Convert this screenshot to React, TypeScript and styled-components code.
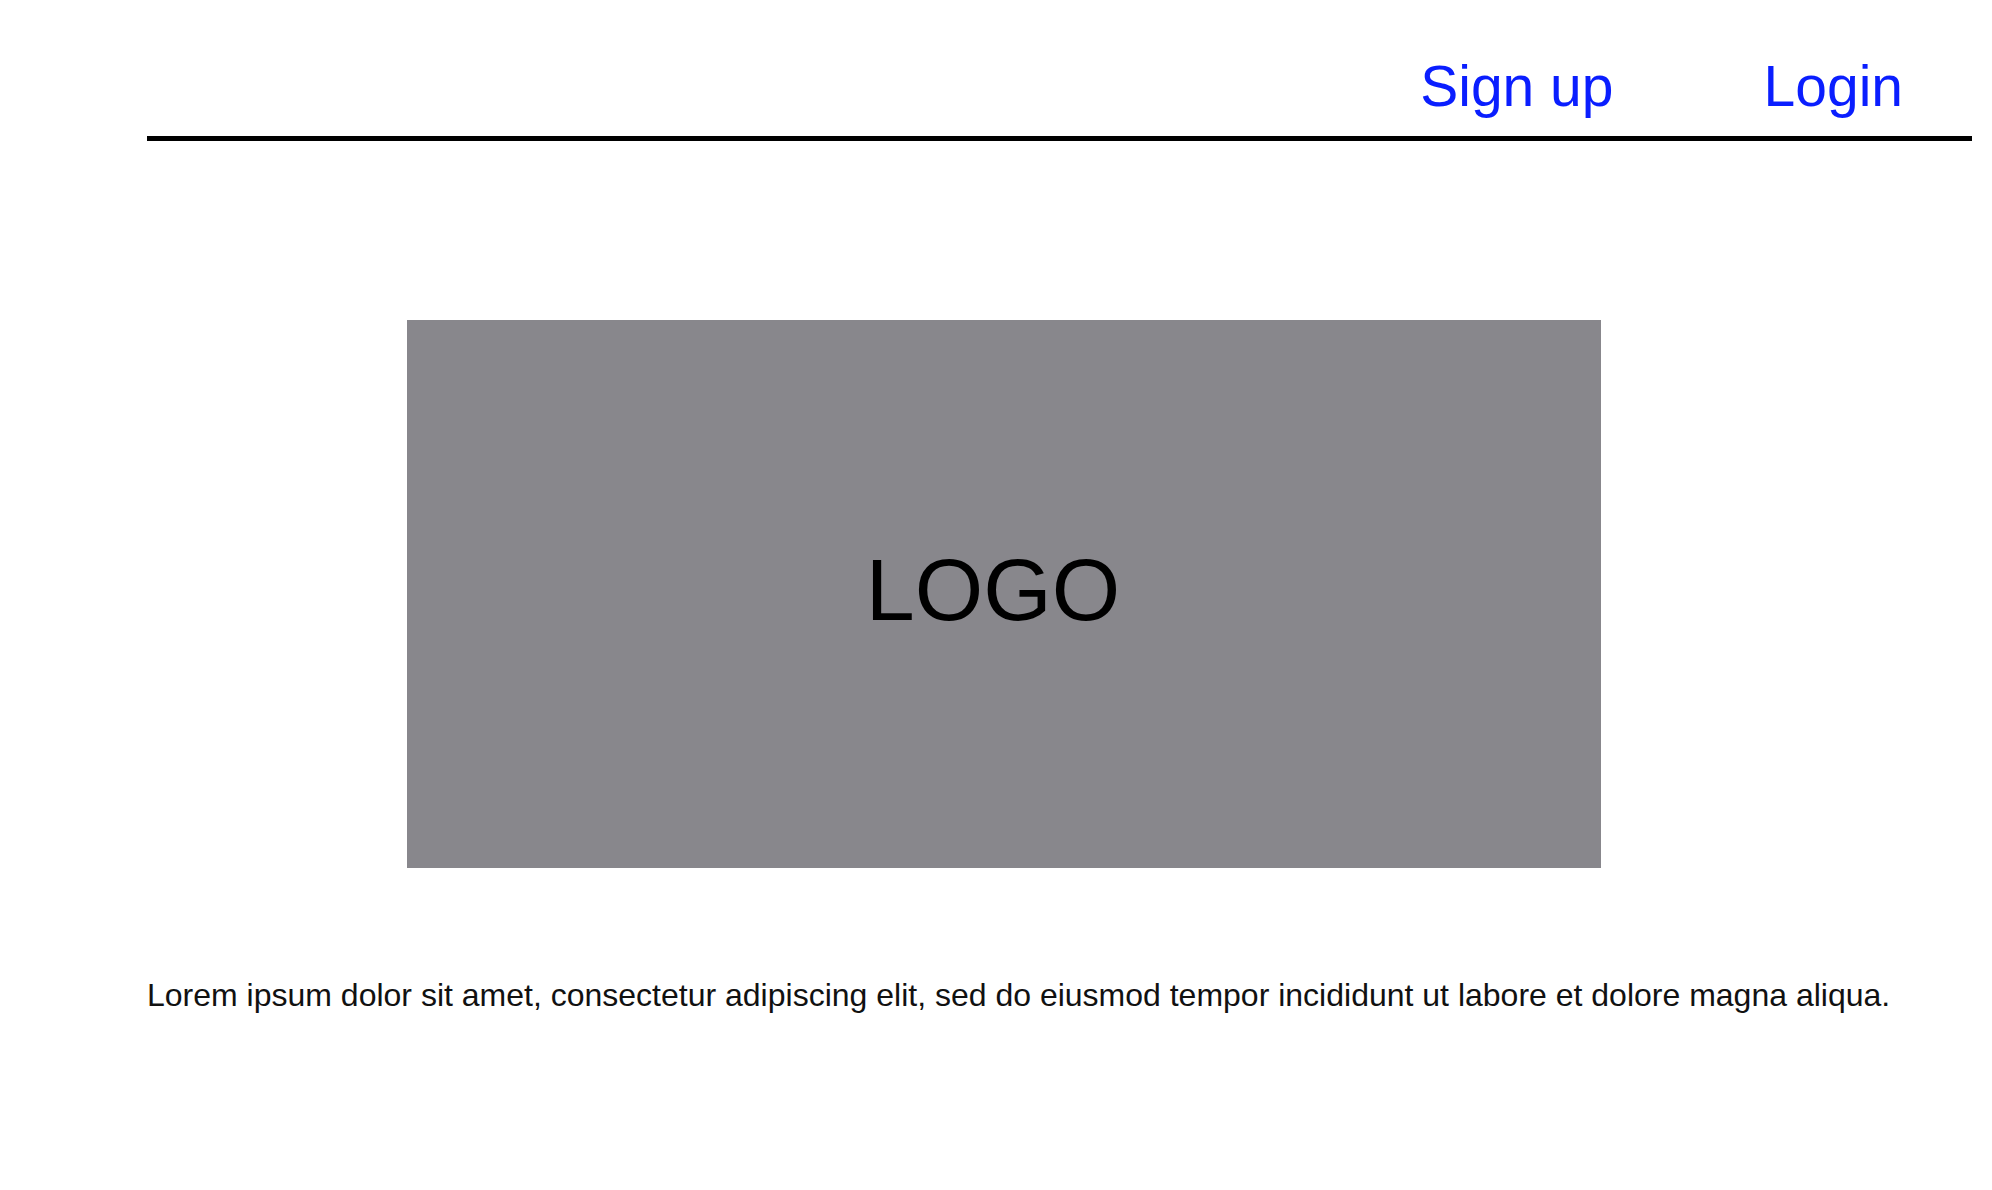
import React from "react";
import styled, { createGlobalStyle } from "styled-components";

const GlobalStyle = createGlobalStyle`
  body {
    margin: 0;
    background: #ffffff;
    font-family: "Liberation Sans", Arial, sans-serif;
  }
`;

const Page = styled.div`
  padding: 0 20px 0 147px;
`;

const Header = styled.header`
  display: flex;
  justify-content: flex-end;
  padding: 53px 69px 17px 0;
  border-bottom: 5px solid #000000;
`;

const NavLink = styled.a<{ $gap?: number }>`
  font-size: 57px;
  color: #0a1eff;
  text-decoration: none;
  margin-left: ${(p) => p.$gap ?? 0}px;
  cursor: pointer;
`;

const LogoBox = styled.div`
  display: flex;
  align-items: center;
  justify-content: center;
  width: 1194px;
  height: 548px;
  margin: 179px 0 0 260px;
  padding: 0 22px 8px 0;
  box-sizing: border-box;
  background: #88878c;
`;

const LogoText = styled.span`
  font-size: 88px;
  color: #000000;
`;

const Intro = styled.p`
  margin: 109px 0 0;
  font-size: 32px;
  color: #111111;
`;

export default function App() {
  return (
    <>
      <GlobalStyle />
      <Page>
        <Header>
          <NavLink>Sign up</NavLink>
          <NavLink $gap={150}>Login</NavLink>
        </Header>
        <LogoBox>
          <LogoText>LOGO</LogoText>
        </LogoBox>
        <Intro>
          Lorem ipsum dolor sit amet, consectetur adipiscing elit, sed do eiusmod tempor incididunt ut labore et dolore magna aliqua.
        </Intro>
      </Page>
    </>
  );
}
